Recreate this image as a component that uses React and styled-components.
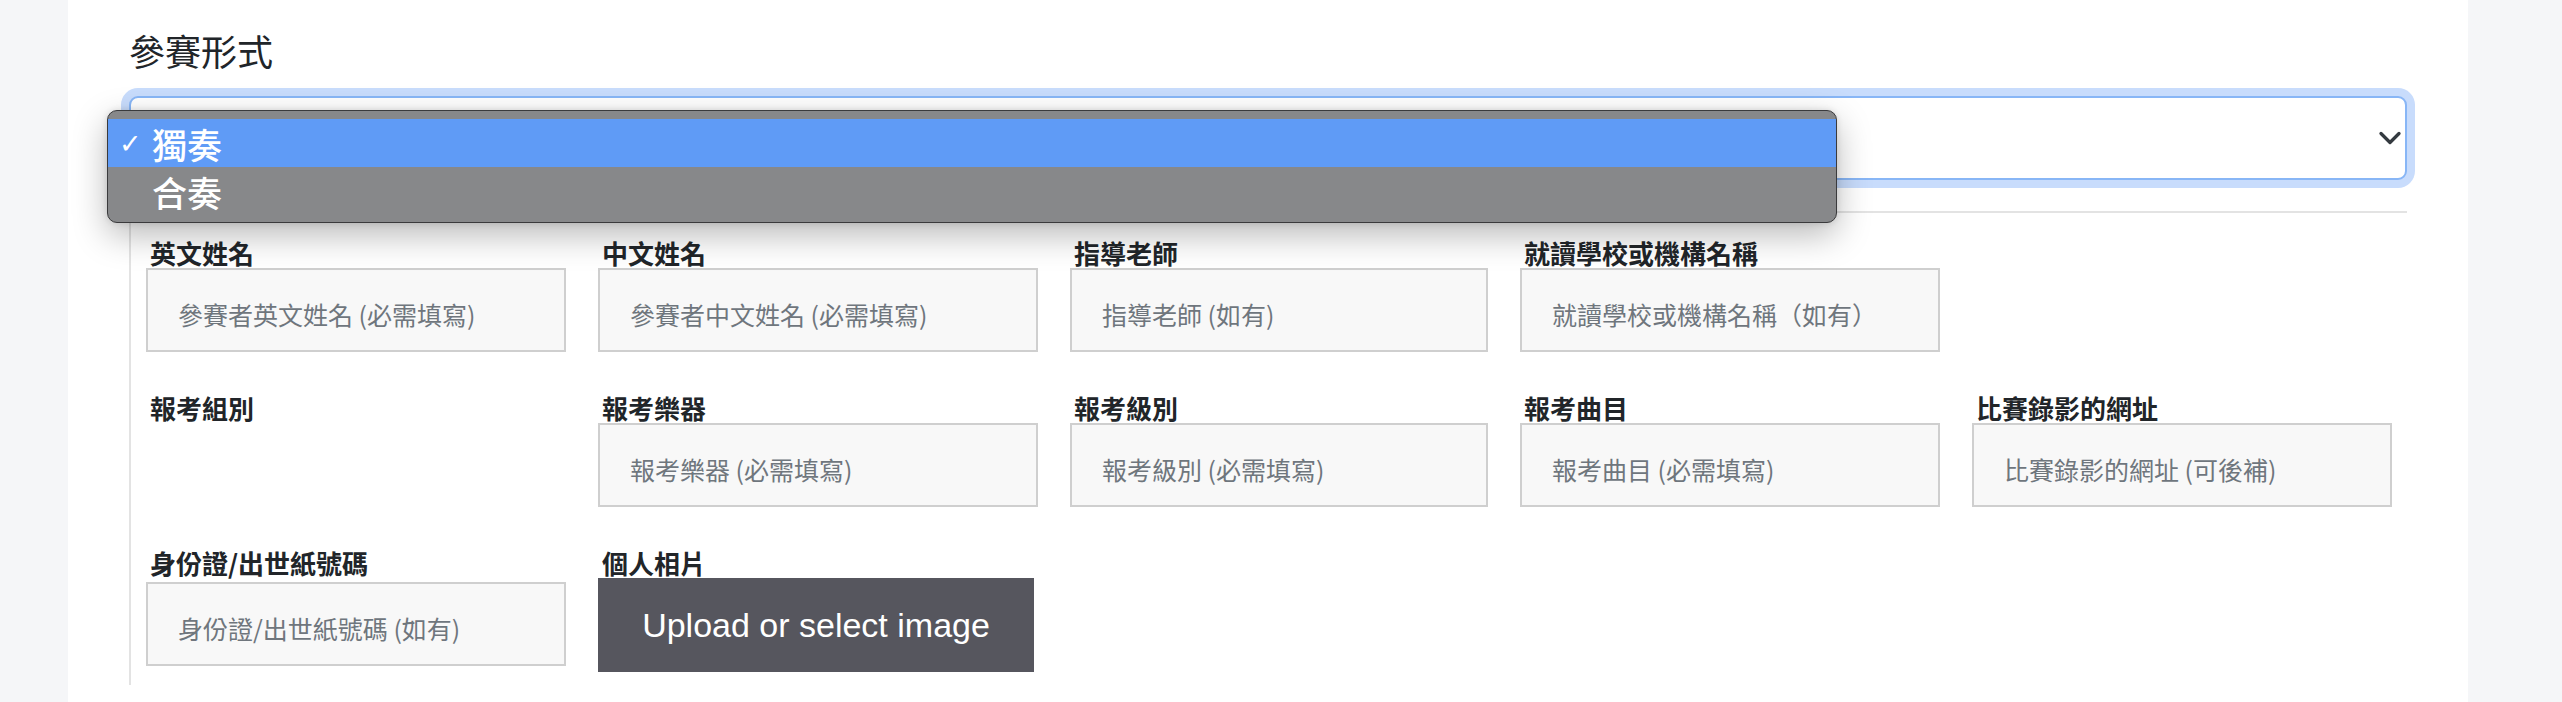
import React from "react";
import styled, { createGlobalStyle } from "styled-components";

const GlobalStyle = createGlobalStyle`
  html, body {
    margin: 0;
    padding: 0;
  }
  body {
    background: #f5f6f8;
    font-family: "Noto Sans CJK TC", "Noto Sans", sans-serif;
    color: #212529;
  }
  *, *::before, *::after {
    box-sizing: border-box;
  }
`;

const Page = styled.div`
  min-height: 702px;
  display: flex;
  padding-left: 68px;
`;

const Panel = styled.main`
  width: 2400px;
  min-height: 702px;
  background: #ffffff;
  padding: 29px 61px 0 61px;
`;

const Title = styled.h2`
  margin: 0;
  font-size: 36px;
  font-weight: 400;
  line-height: 42px;
  color: #212529;
`;

const SelectWrap = styled.div`
  position: relative;
  margin-top: 25px;
`;

const SelectBox = styled.div`
  height: 84px;
  display: flex;
  align-items: center;
  justify-content: flex-end;
  padding: 0 3px 0 24px;
  border: 2px solid #88b6f6;
  border-radius: 9px;
  box-shadow: 0 0 0 8px #c8dcfc;
  background: #ffffff;
`;

const OptionMenu = styled.ul`
  position: absolute;
  left: -22px;
  top: 14px;
  width: 1730px;
  margin: 0;
  padding: 8px 0 7px;
  list-style: none;
  background: #87888a;
  border: 1px solid #3a3a3c;
  border-radius: 10px;
  box-shadow: 0 12px 34px rgba(0, 0, 0, 0.28), 0 0 6px rgba(0, 0, 0, 0.12);
  z-index: 5;
`;

const OptionItem = styled.li`
  height: 48px;
  display: flex;
  align-items: center;
  padding-left: 11px;
  background: ${(p) => (p.$selected ? "#5f9bf6" : "transparent")};
  color: #ffffff;
  font-size: 35px;
  font-weight: 500;
`;

const CheckMark = styled.span`
  width: 33px;
  font-family: "DejaVu Sans", sans-serif;
  font-size: 27px;
  line-height: 1;
`;

const DetailsBox = styled.section`
  margin-top: 31px;
  border-top: 2px solid #e3e3e3;
  border-left: 2px solid #e3e3e3;
  padding: 24px 0 13px 15px;
`;

const FieldGrid = styled.div`
  display: grid;
  grid-template-columns: 420px 440px 418px 420px 420px;
  column-gap: 32px;
  row-gap: 40px;
  align-items: start;
`;

const Field = styled.div`
  display: flex;
  flex-direction: column;
`;

const FieldLabel = styled.label`
  font-size: 26px;
  font-weight: 700;
  line-height: 31px;
  padding-left: 4px;
  margin-bottom: ${(p) => (p.$spaced ? "4px" : "0")};
  color: #212529;
`;

const TextInput = styled.input`
  width: 100%;
  height: 84px;
  margin: 0;
  padding: 8px 30px 0;
  border: 2px solid #cfcfcf;
  border-radius: 0;
  background: #f8f8f8;
  font-family: "Noto Sans CJK TC", "Noto Sans", sans-serif;
  font-size: 25px;
  color: #212529;
  outline: none;
  &::placeholder {
    color: #6f767d;
  }
`;

const ImageButton = styled.button`
  width: 436px;
  height: 94px;
  border: none;
  border-radius: 0;
  background: #56565e;
  color: #ffffff;
  font-family: "Liberation Sans", Arial, sans-serif;
  font-size: 34px;
  cursor: pointer;
`;

const Chevron = () => (
  <svg width="24" height="24" viewBox="0 0 16 16" fill="none">
    <path
      d="M2 5l6 6 6-6"
      stroke="#343a40"
      strokeWidth="2.2"
      strokeLinecap="round"
      strokeLinejoin="round"
    />
  </svg>
);

const rows = [
  [
    { label: "英文姓名", placeholder: "參賽者英文姓名 (必需填寫)" },
    { label: "中文姓名", placeholder: "參賽者中文姓名 (必需填寫)" },
    { label: "指導老師", placeholder: "指導老師 (如有)" },
    { label: "就讀學校或機構名稱", placeholder: "就讀學校或機構名稱（如有）" },
    null,
  ],
  [
    { label: "報考組別" },
    { label: "報考樂器", placeholder: "報考樂器 (必需填寫)" },
    { label: "報考級別", placeholder: "報考級別 (必需填寫)" },
    { label: "報考曲目", placeholder: "報考曲目 (必需填寫)" },
    { label: "比賽錄影的網址", placeholder: "比賽錄影的網址 (可後補)" },
  ],
  [
    { label: "身份證/出世紙號碼", placeholder: "身份證/出世紙號碼 (如有)", spaced: true },
    { label: "個人相片", upload: true },
  ],
];

const options = ["獨奏", "合奏"];

export default function App() {
  return (
    <>
      <GlobalStyle />
      <Page>
        <Panel>
          <Title>參賽形式</Title>
          <SelectWrap>
            <SelectBox>
              <Chevron />
            </SelectBox>
            <OptionMenu>
              {options.map((opt, i) => (
                <OptionItem key={opt} $selected={i === 0}>
                  <CheckMark>{i === 0 ? "✓" : ""}</CheckMark>
                  {opt}
                </OptionItem>
              ))}
            </OptionMenu>
          </SelectWrap>
          <DetailsBox>
            <FieldGrid>
              {rows.flat().map((f, i) =>
                f ? (
                  <Field key={i}>
                    <FieldLabel $spaced={f.spaced}>{f.label}</FieldLabel>
                    {f.upload ? (
                      <ImageButton type="button">Upload or select image</ImageButton>
                    ) : f.placeholder ? (
                      <TextInput placeholder={f.placeholder} />
                    ) : null}
                  </Field>
                ) : (
                  <div key={i} />
                )
              )}
            </FieldGrid>
          </DetailsBox>
        </Panel>
      </Page>
    </>
  );
}
